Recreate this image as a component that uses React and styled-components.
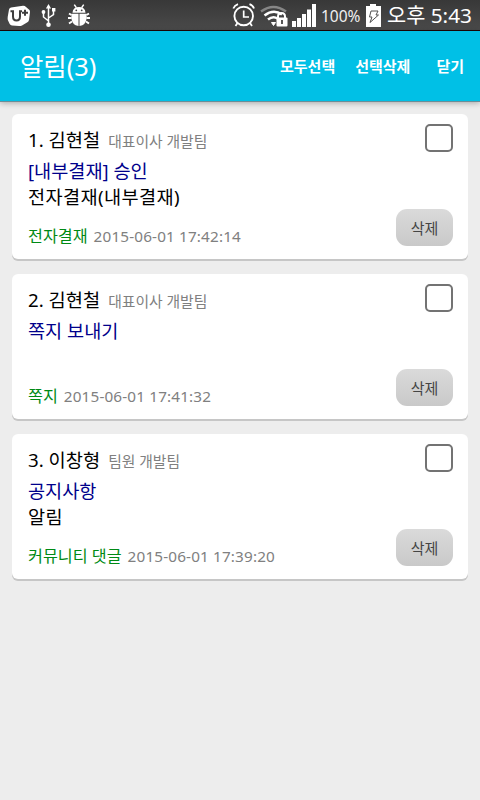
import React from "react";
import styled, { createGlobalStyle } from "styled-components";

const GlobalStyle = createGlobalStyle`
  * { box-sizing: border-box; }
  body {
    margin: 0;
    background: #ededed;
    font-family: "Noto Sans", "Noto Sans CJK KR", sans-serif;
  }
`;

const Screen = styled.div`
  width: 480px;
  height: 800px;
  overflow: hidden;
  display: flex;
  flex-direction: column;
  background: #ededed;
`;

const StatusBar = styled.div`
  flex: none;
  height: 31px;
  display: flex;
  justify-content: space-between;
  background: linear-gradient(#383838, #4a4a4a);
  border-bottom: 1px solid #1c0606;
  color: #fff;
`;

const StatusGroup = styled.div`
  display: flex;
  height: 30px;
`;

const BatteryText = styled.span`
  width: 47px;
  padding-left: 3px;
  font-size: 15.5px;
  line-height: 33px;
  color: #f0f0f0;
  white-space: nowrap;
`;

const Clock = styled.span`
  width: 97px;
  padding-left: 4px;
  font-size: 20.8px;
  line-height: 30px;
  white-space: nowrap;
`;

const AppBar = styled.header`
  flex: none;
  height: 71px;
  display: flex;
  align-items: center;
  padding: 0 16px 0 20px;
  background: #00c0e6;
  border-bottom: 1px solid #698e98;
  box-shadow: 0 1px 6px rgba(0, 0, 0, 0.3);
  color: #fff;
`;

const Title = styled.h1`
  flex: 1;
  margin: 0;
  font-size: 25.4px;
  font-weight: 400;
  line-height: 70px;
`;

const Action = styled.button`
  margin: 0 0 0 ${(p) => p.$gap}px;
  padding: 0;
  border: 0;
  background: none;
  color: #fff;
  font: 700 15px/70px "Noto Sans CJK KR", sans-serif;
`;

const List = styled.main`
  display: flex;
  flex-direction: column;
  gap: 15px;
  padding: 12px 12px 0;
`;

const Card = styled.article`
  height: 145px;
  display: flex;
  justify-content: space-between;
  padding: 10px 15px 0 16px;
  border-radius: 6px;
  background: #fff;
  box-shadow: 0 2px 0 #c6c6c6;
`;

const Details = styled.div`
  display: flex;
  flex-direction: column;
`;

const Line = styled.div`
  flex: none;
  display: flex;
  align-items: baseline;
  height: ${(p) => p.$height}px;
  line-height: ${(p) => p.$height}px;
  white-space: pre;
`;

const Footer = styled(Line)`
  margin-top: 10px;
`;

const Name = styled.span`
  font-size: 18.7px;
  font-weight: 400;
  color: #000;
`;

const Role = styled.span`
  margin-left: 8px;
  font-size: 14.8px;
  color: #808080;
`;

const Subject = styled.span`
  font-size: 18.6px;
  color: #00008b;
`;

const Body = styled.span`
  font-size: 18.6px;
  letter-spacing: 0.4px;
  color: #000;
`;

const Category = styled.span`
  font-size: 16.2px;
  color: #008a14;
`;

const Time = styled.span`
  margin-left: 6px;
  font-size: 15.3px;
  letter-spacing: 0.15px;
  color: #808080;
`;

const Controls = styled.div`
  display: flex;
  flex-direction: column;
  align-items: flex-end;
  justify-content: space-between;
  padding-bottom: 13px;
`;

const Checkbox = styled.button`
  width: 28px;
  height: 28px;
  padding: 0;
  border: 2px solid #737373;
  border-radius: 5px;
  background: #fff;
`;

const DeleteButton = styled.button`
  width: 57px;
  height: 37px;
  padding: 0;
  border: 0;
  border-radius: 11px;
  background: linear-gradient(#dadada, #c9c9c9);
  color: #444;
  font: 400 15px/37px "Noto Sans CJK KR", sans-serif;
`;

const NotificationIcons = () => (
  <svg width="100" height="30" fill="#fff" stroke="none">
    <path d="M11 7.5L23 5.8Q25 5.700 26 7L29.500 10Q30 11 30 12L29 20Q28.700 21.500 27 22.500L22 25.500Q21 26 19 26L12 25.500Q10.500 25.300 9.700 24L7.800 20Q7.500 19 7.700 17L9 9.500Q9.300 7.900 11 7.500Z" />
    <path d="M10.500 11.200h2.500v5.300q0 4 3.500 4t3.500-4v-5.300h2M22 12.700h6M25 9.800v6" fill="none" stroke="#3e3e3e" strokeWidth="2" />
    <path d="M48.500 7v17M48.500 21l-5-4v-4M48.500 18l5-3.500v-4" fill="none" stroke="#fff" strokeWidth="1.5" />
    <path d="M48.500 4l2.600 4.500h-5.200zM52 8h3.400v3.400h-3.400z" />
    <circle cx="43.500" cy="12" r="1.900" />
    <circle cx="48.500" cy="24.700" r="2.300" />
    <path d="M72.500 12.700Q72.800 7 79 7T85.500 12.700Z" />
    <path d="M71.500 13.700h7v12.300Q72 25 71.300 18ZM79.500 13.700h7l.2 4.300Q86 25 79.500 26Z" />
    <path d="M74.300 4.700l2 3M83.700 4.700l-2 3" stroke="#fff" strokeWidth="1.500" />
    <path d="M71.500 15l-2.500-1.500M71.500 18h-3.500M72 21.500l-3 2M86.500 15l2.500-1.500M86.500 18h3.500M86 21.500l3 2" stroke="#fff" strokeWidth="2" />
    <circle cx="76.300" cy="10.300" r=".9" fill="#404040" />
    <circle cx="81.700" cy="10.300" r=".9" fill="#404040" />
  </svg>
);

const SystemIcons = () => (
  <svg width="86" height="30" fill="none" stroke="#fff">
    <circle cx="11.700" cy="16" r="9.300" strokeWidth="1.900" />
    <path d="M11.700 10.500V17H17" strokeWidth="1.700" />
    <path d="M1.300 8.500Q2.500 5.500 6 4.200M22 8.500Q21 5.500 17.500 4.200M5.500 23l-2 3M18 23l2 3" strokeWidth="1.800" />
    <path d="M29 11.500Q41.500 2.500 54 11.500" stroke="#868686" strokeWidth="2.500" />
    <path d="M32.500 15.500Q41.500 8.500 50 14.500M36 19.500Q41 15.500 45.500 18.500" strokeWidth="2.600" />
    <path d="M39.500 22.500l2 3 2-3z" fill="#fff" />
    <path d="M46 18v-1.500q0-3.500 3.500-3.500t3.500 3.500V18" strokeWidth="2" />
    <rect x="44.500" y="17.500" width="11" height="9" rx="1" fill="#fff" stroke="none" />
    <path d="M50 20v4" stroke="#444" strokeWidth="1.800" />
    <path d="M62 27v-6M67 27V18M72 27V14M77 27V9.500M82 27V4" strokeWidth="4" />
  </svg>
);

const BatteryIcon = () => (
  <svg width="18" height="30">
    <path d="M5 4h6v2h5v21H1V6h4z" fill="#fff" />
    <path d="M6 11h7l-2 4h2.500L5 22.500 7 17H4.500z" fill="none" stroke="#505050" strokeWidth="1" />
  </svg>
);

const notifications = [
  { id: 1, name: "김현철", role: "대표이사 개발팀", subject: "[내부결재] 승인", body: "전자결재(내부결재)", category: "전자결재", time: "2015-06-01 17:42:14" },
  { id: 2, name: "김현철", role: "대표이사 개발팀", subject: "쪽지 보내기", body: "", category: "쪽지", time: "2015-06-01 17:41:32" },
  { id: 3, name: "이창형", role: "팀원 개발팀", subject: "공지사항", body: "알림", category: "커뮤니티 댓글", time: "2015-06-01 17:39:20" },
];

export default function App() {
  return (
    <Screen>
      <GlobalStyle />
      <StatusBar>
        <StatusGroup><NotificationIcons /></StatusGroup>
        <StatusGroup>
          <SystemIcons />
          <BatteryText>100%</BatteryText>
          <BatteryIcon />
          <Clock>오후 5:43</Clock>
        </StatusGroup>
      </StatusBar>
      <AppBar>
        <Title>알림(3)</Title>
        <Action $gap={0}>모두선택</Action>
        <Action $gap={20}>선택삭제</Action>
        <Action $gap={26}>닫기</Action>
      </AppBar>
      <List>
        {notifications.map((n) => (
          <Card key={n.id}>
            <Details>
              <Line $height={31}>
                <Name>{n.id}. {n.name}</Name>
                <Role>{n.role}</Role>
              </Line>
              <Line $height={32}><Subject>{n.subject}</Subject></Line>
              <Line $height={19}><Body>{n.body}</Body></Line>
              <Footer $height={41}>
                <Category>{n.category}</Category>
                <Time>{n.time}</Time>
              </Footer>
            </Details>
            <Controls>
              <Checkbox aria-label="선택" />
              <DeleteButton>삭제</DeleteButton>
            </Controls>
          </Card>
        ))}
      </List>
    </Screen>
  );
}
